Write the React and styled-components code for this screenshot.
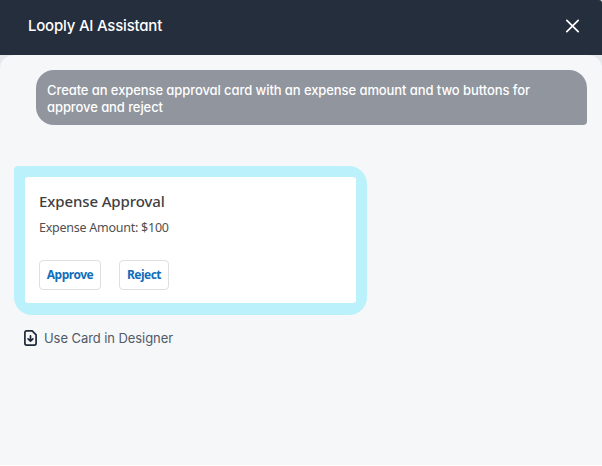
import React from "react";
import styled, { createGlobalStyle } from "styled-components";

const GlobalStyle = createGlobalStyle`
  * { box-sizing: border-box; }
  body { margin: 0; background: #fff; overflow: hidden; }
`;

const Panel = styled.main`
  width: 602px;
  height: 465px;
  display: flex;
  flex-direction: column;
  background: #e6e9ec;
  font-family: Inter, sans-serif;
`;

const Header = styled.header`
  height: 55px;
  flex: none;
  display: flex;
  align-items: center;
  justify-content: space-between;
  padding: 0 22px 3px 28px;
  background: #252e3d;
  border-top-right-radius: 3px;
`;

const Title = styled.h1`
  margin: 0;
  font-size: 15px;
  line-height: 20px;
  font-weight: 500;
  letter-spacing: -0.21px;
  font-feature-settings: "cv11";
  color: #fff;
`;

const CloseButton = styled.button`
  display: flex;
  padding: 0;
  border: 0;
  background: none;
`;

const Conversation = styled.section`
  flex: 1;
  display: flex;
  flex-direction: column;
  align-items: flex-start;
  padding: 15px 15px 0 14px;
  background: #f5f7f9;
  border-radius: 14px 14px 0 0;
`;

const Prompt = styled.p`
  align-self: flex-end;
  width: 551px;
  height: 55px;
  margin: 0 0 41px;
  padding: 12px 11px;
  border-radius: 18px 18px 4px 18px;
  background: #90959e;
  color: #fff;
  font-size: 13px;
  line-height: 16.5px;
  font-weight: 500;
  letter-spacing: -0.085px;
  white-space: pre-line;
  font-feature-settings: "cv11";
`;

const Reply = styled.div`
  width: 353px;
  height: 149px;
  padding: 11px 11px 12px;
  border-radius: 4px 18px 18px 18px;
  background: #bbf1fa;
`;

const Card = styled.article`
  height: 126px;
  padding: 14px 14px;
  border-radius: 3px;
  background: #fff;
  font-family: "Noto Sans", sans-serif;
`;

const CardTitle = styled.h2`
  margin: 0;
  font-size: 15px;
  line-height: 20px;
  font-weight: 500;
  letter-spacing: -0.12px;
  color: #404040;
`;

const CardText = styled.p`
  margin: 7px 0 22px;
  font-size: 12.5px;
  line-height: 20px;
  letter-spacing: -0.25px;
  color: #505050;
`;

const Actions = styled.div`
  display: flex;
  gap: 18px;
`;

const ActionButton = styled.button`
  width: ${({ $width }) => $width}px;
  height: 30px;
  padding: 0 0 1px;
  border: 1px solid #dfdfdf;
  border-radius: 4px;
  background: #fff;
  color: #126dbb;
  font: 700 12px/20px "Noto Sans", sans-serif;
  letter-spacing: -0.5px;
`;

const DesignerLink = styled.button`
  display: flex;
  align-items: center;
  gap: 7px;
  margin: 13px 0 0 10px;
  padding: 0;
  border: 0;
  background: none;
  color: #525a67;
  font: 400 13px/20px Inter, sans-serif;
  letter-spacing: -0.07px;
`;

function CloseIcon() {
  return (
    <svg width="15" height="15" viewBox="0 0 15 15" fill="none" stroke="#fff" strokeWidth="1.7" strokeLinecap="round">
      <path d="M1.8 1.3 13.2 12.7M13.2 1.3 1.8 12.7" />
    </svg>
  );
}

function DownloadIcon() {
  return (
    <svg width="13" height="16" viewBox="0 0 13 16" fill="none" stroke="#202938" strokeWidth="1.7" strokeLinecap="round" strokeLinejoin="round">
      <path d="M2.7.9H8.2L12.1 4.8V13.2Q12.1 15.1 10.3 15.1H2.7Q.9 15.1.9 13.2V2.8Q.9.9 2.7.9Z" />
      <path d="M6.5 5.8V10.8M4.1 8.8 6.5 11.1 8.9 8.8" />
    </svg>
  );
}

export default function App() {
  return (
    <>
      <GlobalStyle />
      <Panel>
        <Header>
          <Title>Looply AI Assistant</Title>
          <CloseButton aria-label="Close"><CloseIcon /></CloseButton>
        </Header>
        <Conversation>
          <Prompt>{"Create an expense approval card with an expense amount and two buttons for\napprove and reject"}</Prompt>
          <Reply>
            <Card>
              <CardTitle>Expense Approval</CardTitle>
              <CardText>Expense Amount: $100</CardText>
              <Actions>
                <ActionButton $width={62}>Approve</ActionButton>
                <ActionButton $width={50}>Reject</ActionButton>
              </Actions>
            </Card>
          </Reply>
          <DesignerLink><DownloadIcon />Use Card in Designer</DesignerLink>
        </Conversation>
      </Panel>
    </>
  );
}
